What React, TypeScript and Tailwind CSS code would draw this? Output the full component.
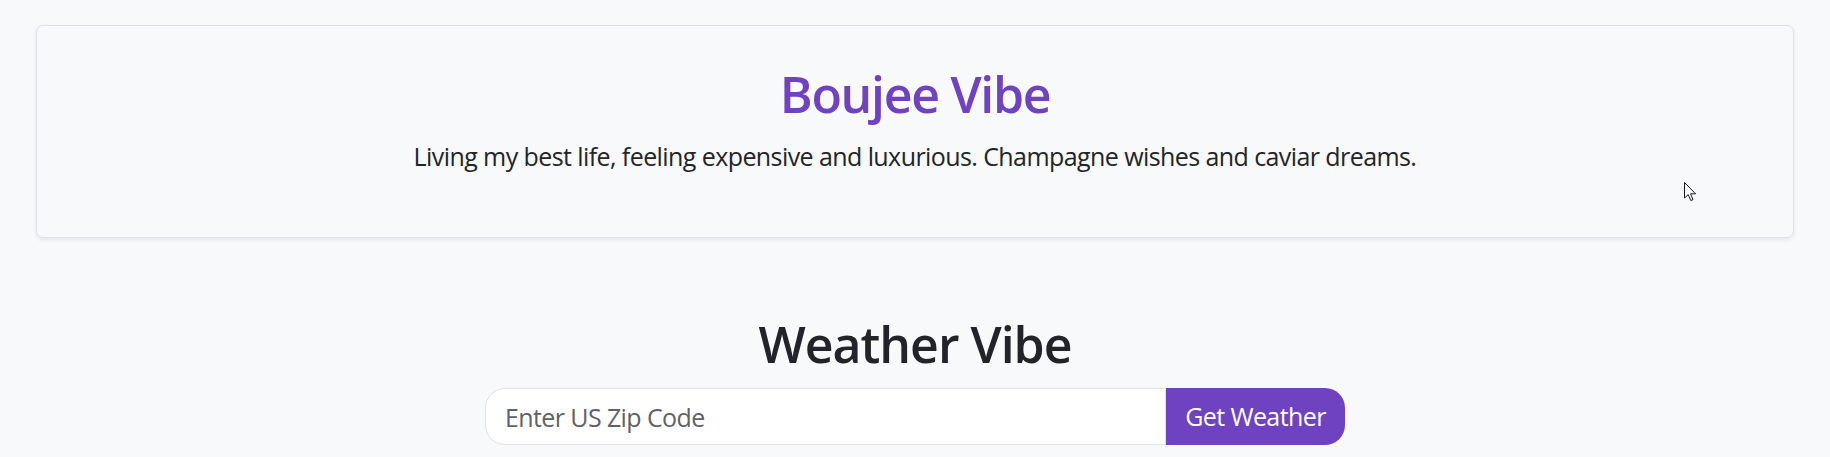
import { useState } from "react";

function Cursor() {
  return (
    <svg
      className="pointer-events-none absolute left-[1684px] top-[182px]"
      width="13"
      height="20"
      viewBox="0 0 13 20"
    >
      <path
        d="M0.5 0.5 L0.5 16 L4.2 12.6 L6.8 18.6 L9 17.6 L6.5 11.8 L11.6 11.8 Z"
        fill="#ffffff"
        stroke="#1a1a1a"
        strokeWidth="1"
        strokeLinejoin="miter"
      />
    </svg>
  );
}

export default function App() {
  const [zip, setZip] = useState("");

  return (
    <div className="relative min-h-[457px] bg-[#f8f9fa] font-['Open_Sans',sans-serif] text-[#212529]">
      <div className="px-[36px] pt-[25px]">
        <div className="h-[213px] rounded-[7px] border border-[#dee2e6] bg-[#f8f9fa] pt-[38px] text-center shadow-[0_2px_4px_rgba(0,0,0,0.075)]">
          <h1 className="text-[50px] font-semibold leading-[60px] tracking-[-1.3px] text-[#6f42c1]">
            Boujee Vibe
          </h1>
          <p className="mt-[14px] text-[25px] leading-[36px] tracking-[-0.58px]">
            Living my best life, feeling expensive and luxurious. Champagne wishes and caviar dreams.
          </p>
        </div>
      </div>

      <div className="mt-[76px] flex flex-col items-center">
        <h2 className="text-[50px] font-semibold leading-[60px] tracking-[-1px]">Weather Vibe</h2>
        <form
          className="mt-[14px] flex h-[57px] w-[860px]"
          onSubmit={(event) => event.preventDefault()}
        >
          <input
            type="text"
            value={zip}
            onChange={(event) => setZip(event.target.value)}
            placeholder="Enter US Zip Code"
            className="h-full min-w-0 flex-1 rounded-l-[20px] border border-[#dee2e6] bg-white pl-[19px] text-[25px] tracking-[-0.6px] outline-none placeholder:text-[#5f6265]"
          />
          <button
            type="submit"
            className="h-full w-[179px] rounded-r-[20px] bg-[#6f42c1] text-[25px] tracking-[-0.6px] text-white"
          >
            Get Weather
          </button>
        </form>
      </div>

      <Cursor />
    </div>
  );
}
